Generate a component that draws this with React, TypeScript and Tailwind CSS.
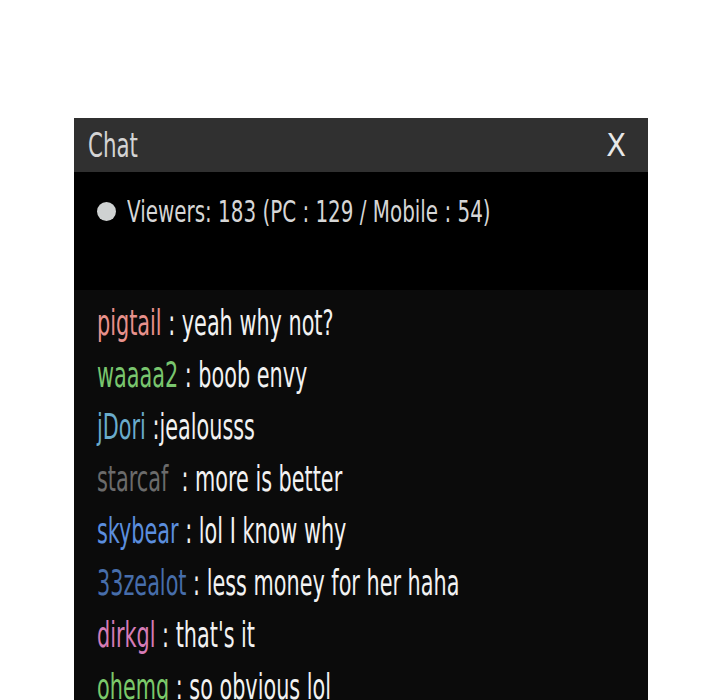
import React from 'react'

const font = { fontFamily: '"Liberation Sans Narrow", "DejaVu Sans Condensed", "Roboto", sans-serif' }

const messages = [
  { name: 'pigtail', color: 'text-[#e8918c]', sep: ' : ', text: 'yeah why not?' },
  { name: 'waaaa2', color: 'text-[#79c66e]', sep: ' : ', text: 'boob envy' },
  { name: 'jDori', color: 'text-[#6aaccb]', sep: ' :', text: 'jealousss' },
  { name: 'starcaf', color: 'text-[#6b6b6b]', sep: '  : ', text: 'more is better' },
  { name: 'skybear', color: 'text-[#5b8ede]', sep: ' : ', text: 'lol I know why' },
  { name: '33zealot', color: 'text-[#476eab]', sep: ' : ', text: 'less money for her haha' },
  { name: 'dirkgl', color: 'text-[#d67cb6]', sep: ' : ', text: "that's it" },
  { name: 'ohemg', color: 'text-[#7bc96a]', sep: ' : ', text: 'so obvious lol' },
]

export default function App() {
  return (
    <div className="w-[720px] h-[700px] bg-white overflow-hidden pt-[118px] pl-[74px]" style={font}>
      <div className="w-[574px] h-[600px] bg-[#0b0b0b]">
        {/* header */}
        <div className="h-[54px] bg-[#303030] flex items-center justify-between pl-[14px] pr-[22px]">
          <span className="inline-block origin-left scale-x-[0.72] text-[33px] text-[#d4d4d4] leading-none">Chat</span>
          <span className="text-[32px] text-[#e8e8e8] leading-none">X</span>
        </div>

        {/* viewers */}
        <div className="h-[118px] bg-black pl-[23px] pt-[24px]">
          <div className="flex items-center gap-[11px]">
            <span className="shrink-0 w-[19px] h-[19px] rounded-full bg-[#cfd2d2]" />
            <span className="inline-block origin-left scale-x-[0.714] whitespace-nowrap text-[31px] text-[#d6d6d6] leading-none">
              Viewers: 183 (PC : 129 / Mobile : 54)
            </span>
          </div>
        </div>

        {/* messages */}
        <div className="pl-[23px] pt-[7px] flex flex-col">
          {messages.map((m) => (
            <div key={m.name} className="h-[52px] flex items-center text-[35px] leading-none">
              <span className="inline-block origin-left scale-x-[0.66] whitespace-pre">
                <span className={m.color}>{m.name}</span>
                <span className="text-[#f2f2f2]">{m.sep}{m.text}</span>
              </span>
            </div>
          ))}
        </div>
      </div>
    </div>
  )
}
